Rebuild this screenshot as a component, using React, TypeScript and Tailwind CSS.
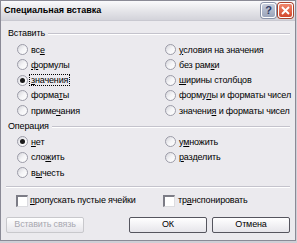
import React from "react";

const Radio = ({ checked = false }: { checked?: boolean }) => (
  <span className="relative w-[11px] h-[11px] rounded-full border border-[#9c9ca8] bg-gradient-to-br from-[#d4d4da] via-[#f4f4f6] to-white flex items-center justify-center shrink-0">
    {checked && <span className="w-[5px] h-[5px] rounded-full bg-[#1a1a1a]" />}
  </span>
);

const Check = () => (
  <span className="w-[12px] h-[12px] border-t-2 border-l-2 border-b border-r border-t-[#7c7c86] border-l-[#7c7c86] border-b-[#dcdce0] border-r-[#dcdce0] bg-white shrink-0" />
);

const Opt = ({
  checked,
  children,
  focus,
}: {
  checked?: boolean;
  children: React.ReactNode;
  focus?: boolean;
}) => (
  <div className="flex items-center h-[15px] gap-[1px] whitespace-nowrap">
    <Radio checked={checked} />
    <span
      className={
        focus
          ? "ml-[0px] px-[1px] border border-dotted border-black leading-[10px]"
          : "ml-[2px] leading-[10px]"
      }
    >
      {children}
    </span>
  </div>
);

const GroupHead = ({ label }: { label: string }) => (
  <div className="flex items-center h-[12px]">
    <span className="mr-[3px]">{label}</span>
    <div className="flex-1 border-t border-b border-t-[#c4c3cc] border-b-white" />
  </div>
);

const Btn = ({
  children,
  disabled,
}: {
  children: React.ReactNode;
  disabled?: boolean;
}) => (
  <div
    className={
      "w-[78px] h-[16px] flex items-center justify-center border rounded-[2px] bg-gradient-to-b from-white to-[#e6e5ea] " +
      (disabled
        ? "border-[#c8c8cc] text-[#a8a8b0]"
        : "border-[#55555e] text-black")
    }
  >
    {children}
  </div>
);

export default function App() {
  return (
    <div
      className="w-[297px] h-[243px] bg-[#cfcfd6] overflow-hidden text-[9px] tracking-[-0.15px] text-black"
      style={{ fontFamily: "'Liberation Sans', Arial, sans-serif" }}
    >
      <div className="w-[296px] h-[241px] border border-[#8a8a96] bg-[#ebeaee] flex flex-col">
        {/* title bar */}
        <div className="h-[20px] bg-gradient-to-b from-[#fafafc] via-[#e6e6ea] to-[#d3d3da] flex items-center pl-[3px] pr-[2px] border-b border-[#c8c8d0]">
          <span className="font-bold text-[9px] tracking-[0px] flex-1">
            Специальная вставка
          </span>
          <div className="flex gap-[2px] items-center">
            <div className="w-[15px] h-[15px] rounded-[3px] border border-white bg-gradient-to-b from-[#c6cddc] to-[#9aa4ba] flex items-center justify-center text-[11px] font-bold text-[#2f3a66] shadow-[0_0_0_1px_#8a94aa]">
              ?
            </div>
            <div className="w-[15px] h-[15px] rounded-[3px] border border-white bg-gradient-to-b from-[#f0876c] to-[#d1452a] flex items-center justify-center shadow-[0_0_0_1px_#a8442e]">
              <svg width="9" height="9" viewBox="0 0 9 9">
                <path d="M1 1 L8 8 M8 1 L1 8" stroke="white" strokeWidth="1.8" />
              </svg>
            </div>
          </div>
        </div>
        {/* body */}
        <div className="flex-1 pl-[7px] pr-[5px] pt-[7px] flex flex-col">
          <GroupHead label="Вставить" />
          <div className="ml-[9px] mt-[2px] flex">
            <div className="w-[148px] shrink-0 flex flex-col gap-[0.3px]">
              <Opt>
                вс<u>е</u>
              </Opt>
              <Opt>
                <u>ф</u>ормулы
              </Opt>
              <Opt checked focus>
                <u>з</u>начения
              </Opt>
              <Opt>
                форма<u>т</u>ы
              </Opt>
              <Opt>
                приме<u>ч</u>ания
              </Opt>
            </div>
            <div className="flex flex-col gap-[0.3px]">
              <Opt>
                <u>у</u>словия на значения
              </Opt>
              <Opt>
                без рам<u>к</u>и
              </Opt>
              <Opt>
                <u>ш</u>ирины столбцов
              </Opt>
              <Opt>
                форму<u>л</u>ы и форматы чисел
              </Opt>
              <Opt>
                значени<u>я</u> и форматы чисел
              </Opt>
            </div>
          </div>
          <div className="mt-[3px]">
            <GroupHead label="Операция" />
          </div>
          <div className="ml-[9px] mt-[1px] flex">
            <div className="w-[148px] shrink-0 flex flex-col gap-[0.5px]">
              <Opt checked>
                <u>н</u>ет
              </Opt>
              <Opt>
                сло<u>ж</u>ить
              </Opt>
              <Opt>
                в<u>ы</u>честь
              </Opt>
            </div>
            <div className="flex flex-col gap-[0.5px]">
              <Opt>
                у<u>м</u>ножить
              </Opt>
              <Opt>
                <u>р</u>азделить
              </Opt>
            </div>
          </div>
          <div className="mt-[6px] -ml-[2px] border-t border-b border-t-[#c4c3cc] border-b-white" />
          <div className="ml-[8px] mt-[6px] flex">
            <div className="w-[147px] shrink-0 flex items-center h-[13px] whitespace-nowrap">
              <Check />
              <span className="ml-[2px]">
                <u>п</u>ропускать пустые ячейки
              </span>
            </div>
            <div className="flex items-center h-[13px] whitespace-nowrap">
              <Check />
              <span className="ml-[3px]">
                тр<u>а</u>нспонировать
              </span>
            </div>
          </div>
          <div className="mt-[10px] -ml-[2px] flex">
            <Btn disabled>Вставить связь</Btn>
            <div className="ml-auto flex gap-[5px] mr-[0px]">
              <Btn>ОК</Btn>
              <Btn>Отмена</Btn>
            </div>
          </div>
        </div>
      </div>
    </div>
  );
}
